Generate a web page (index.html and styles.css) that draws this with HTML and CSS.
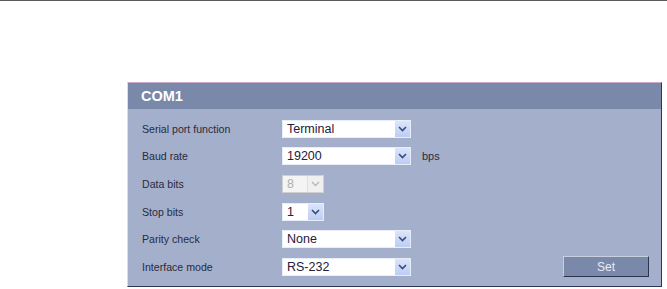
FILE: index.html
```html
<!DOCTYPE html>
<html>
<head>
<meta charset="utf-8">
<link rel="stylesheet" href="styles.css">
</head>
<body>
<div class="topline"></div>
<div class="panel">
  <div class="panel-head">COM1</div>
  <div class="panel-body">
    <div class="row">
      <span class="label">Serial port function</span>
      <div class="sel wide"><span class="val">Terminal</span><span class="arrow"><svg width="9" height="6" viewBox="0 0 9 6"><path d="M1 1 L4.5 4.5 L8 1" fill="none" stroke="#3a4a7a" stroke-width="1.6"/></svg></span></div>
    </div>
    <div class="row">
      <span class="label">Baud rate</span>
      <div class="sel wide"><span class="val">19200</span><span class="arrow"><svg width="9" height="6" viewBox="0 0 9 6"><path d="M1 1 L4.5 4.5 L8 1" fill="none" stroke="#3a4a7a" stroke-width="1.6"/></svg></span></div>
      <span class="unit">bps</span>
    </div>
    <div class="row">
      <span class="label">Data bits</span>
      <div class="sel narrow disabled"><span class="val">8</span><span class="arrow"><svg width="9" height="6" viewBox="0 0 9 6"><path d="M1 1 L4.5 4.5 L8 1" fill="none" stroke="#b8b8b8" stroke-width="1.4"/></svg></span></div>
    </div>
    <div class="row">
      <span class="label">Stop bits</span>
      <div class="sel narrow"><span class="val">1</span><span class="arrow"><svg width="9" height="6" viewBox="0 0 9 6"><path d="M1 1 L4.5 4.5 L8 1" fill="none" stroke="#3a4a7a" stroke-width="1.6"/></svg></span></div>
    </div>
    <div class="row">
      <span class="label">Parity check</span>
      <div class="sel wide"><span class="val">None</span><span class="arrow"><svg width="9" height="6" viewBox="0 0 9 6"><path d="M1 1 L4.5 4.5 L8 1" fill="none" stroke="#3a4a7a" stroke-width="1.6"/></svg></span></div>
    </div>
    <div class="row">
      <span class="label">Interface mode</span>
      <div class="sel wide"><span class="val">RS-232</span><span class="arrow"><svg width="9" height="6" viewBox="0 0 9 6"><path d="M1 1 L4.5 4.5 L8 1" fill="none" stroke="#3a4a7a" stroke-width="1.6"/></svg></span></div>
      <button class="btn">Set</button>
    </div>
  </div>
</div>
</body>
</html>
```
FILE: styles.css
```css
html, body {
  margin: 0;
  padding: 0;
  background: #ffffff;
  font-family: "Liberation Sans", Arial, sans-serif;
}
.topline {
  height: 1px;
  background: #5a5a5a;
}
.panel {
  margin: 81px 0 0 127px;
  width: 533px;
  border-top: 1px solid #b9c7cf;
  border-left: 1px solid #cfe3ea;
  border-right: 1px solid #2e3656;
  border-bottom: 1px solid #2e3656;
  background: #a4b0cb;
}
.panel-head {
  height: 26px;
  background: #7a88a9;
  color: #ffffff;
  font-weight: bold;
  font-size: 14.5px;
  line-height: 26px;
  padding-left: 13px;
  border-top: 1px solid #c9a9c9;
  margin-top: -1px;
}
.panel-body {
  padding: 6px 12px 5px 14px;
}
.row {
  display: flex;
  align-items: center;
  height: 27.6px;
}
.label {
  width: 140px;
  font-size: 10.6px;
  color: #2a2a3e;
}
.sel {
  display: flex;
  align-items: stretch;
  height: 16px;
  border: 1px solid #e8eef8;
  background: #ffffff;
  box-sizing: content-box;
}
.sel.wide { width: 127px; }
.sel.narrow { width: 40px; }
.val {
  flex: 1;
  font-size: 12.5px;
  line-height: 16px;
  padding-left: 4px;
  color: #22203a;
}
.arrow {
  width: 15px;
  display: flex;
  align-items: center;
  justify-content: center;
  background: linear-gradient(#dbe5fb, #bccdf3);
  border-left: 1px solid #ffffff;
}
.sel.disabled {
  background: #f4f4f4;
  border-color: #d0d0d0;
}
.sel.disabled .val { color: #b0b0b0; }
.sel.disabled .arrow {
  background: #f0f0f0;
  border-left: 1px solid #e0e0e0;
}
.unit {
  margin-left: 11px;
  font-size: 11px;
  color: #2a2a3e;
}
.btn {
  margin-left: auto;
  width: 86px;
  height: 21px;
  background: #7a88a9;
  color: #e8ecf4;
  font-family: "Liberation Sans", Arial, sans-serif;
  font-size: 12px;
  border-top: 1px solid #c8d0e0;
  border-left: 1px solid #c8d0e0;
  border-right: 1px solid #2e3450;
  border-bottom: 1px solid #2e3450;
  padding: 0;
}
```
